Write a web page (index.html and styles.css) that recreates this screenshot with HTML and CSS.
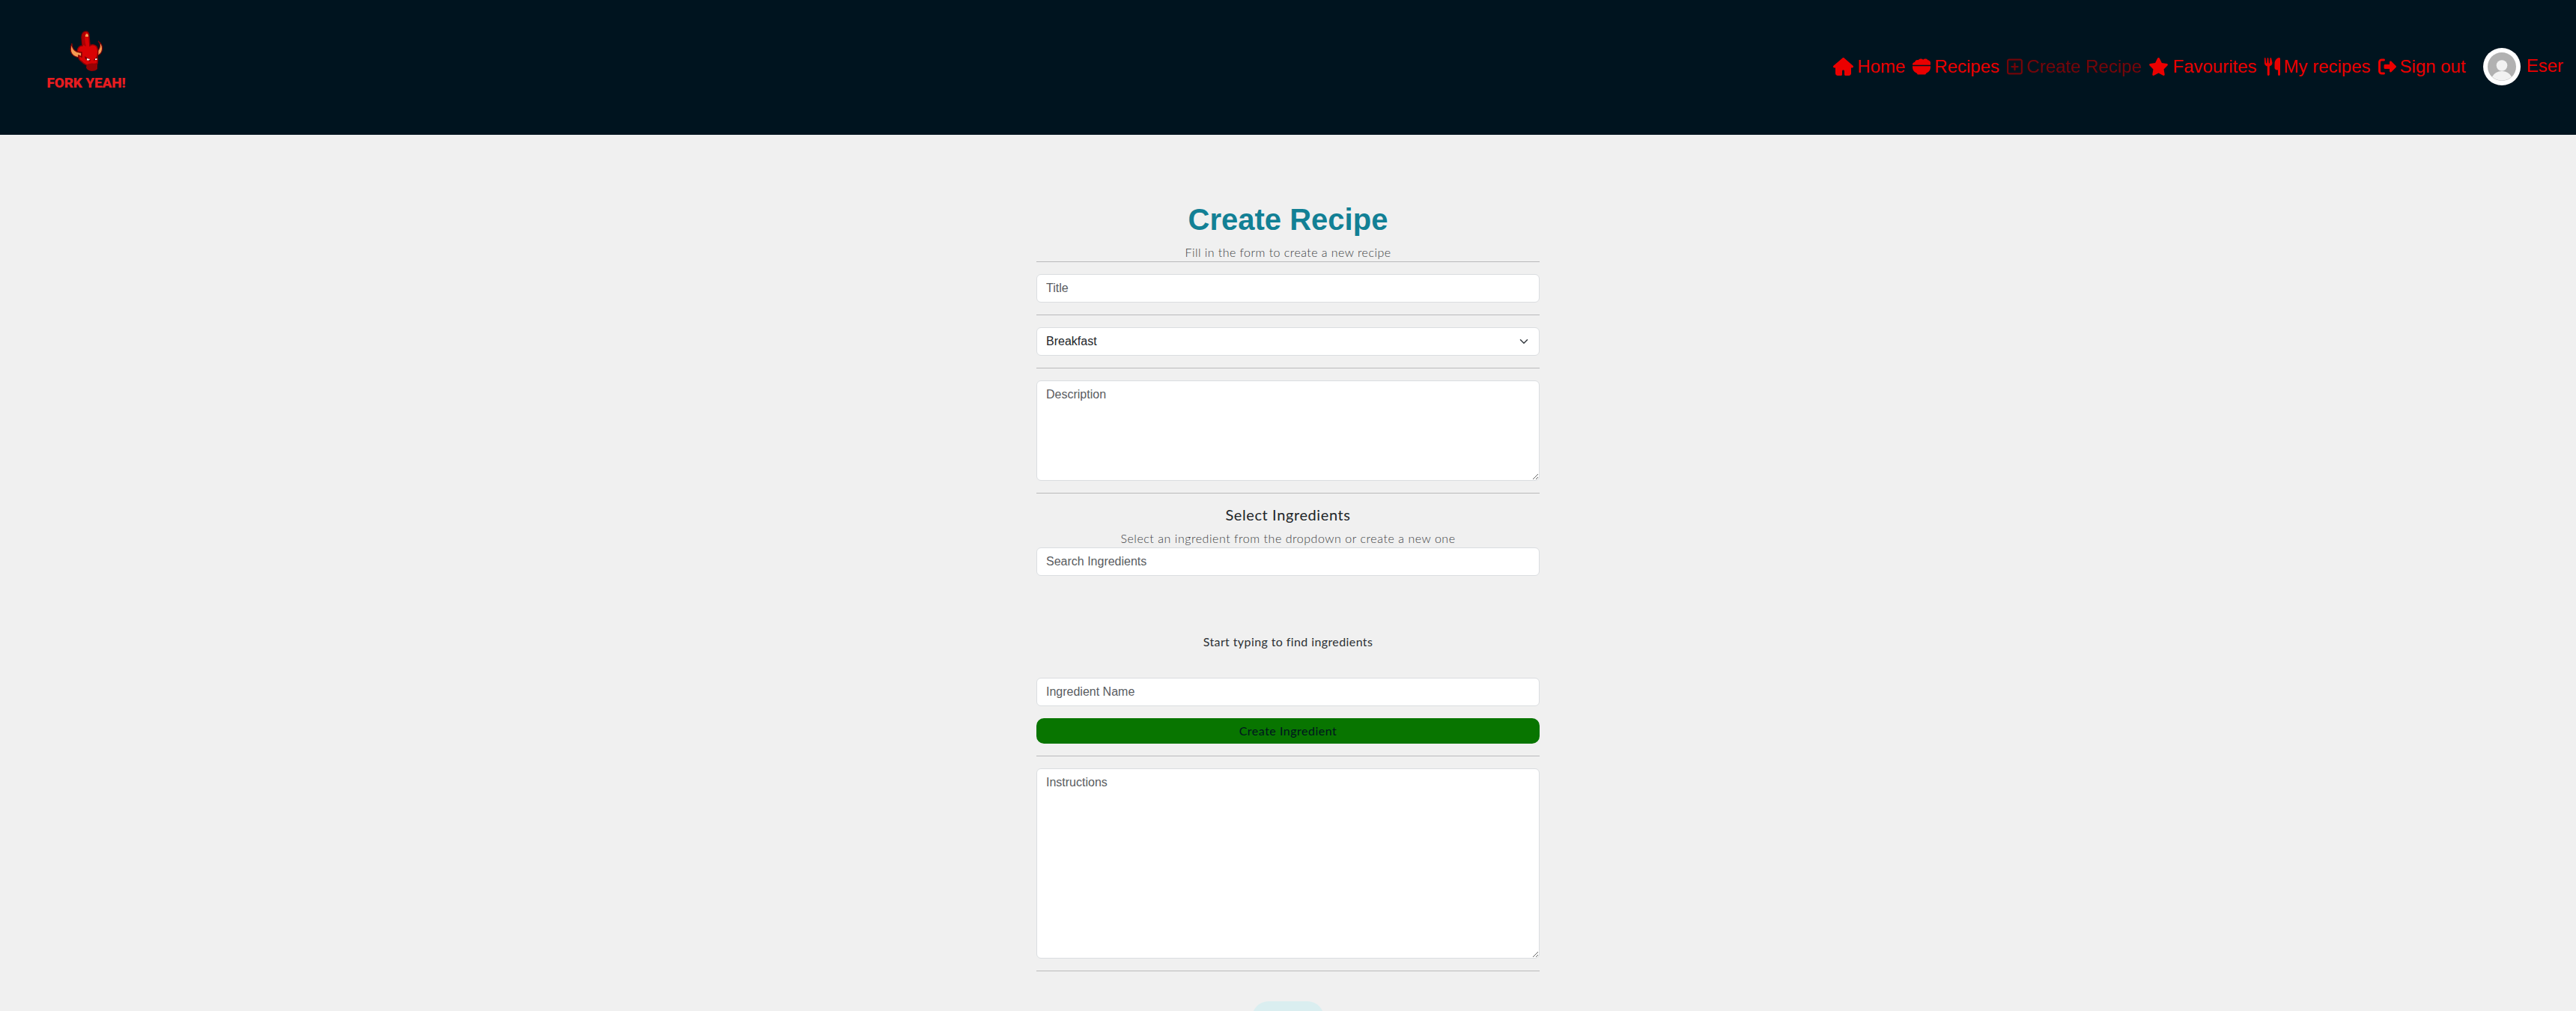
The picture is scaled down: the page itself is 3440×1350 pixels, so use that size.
FILE: index.html
```html
<!DOCTYPE html>
<html lang="en">
<head>
<meta charset="utf-8">
<title>Fork Yeah!</title>
<link rel="stylesheet" href="styles.css">
</head>
<body>
<header class="navbar">
  <a class="brand">
    <svg class="brand-mark" viewBox="0 0 46 55" width="46" height="55">
      <path d="M4 17C-1 29 5 36 17 36V29C9 29 4 25 4 17Z" fill="#f59b52" stroke="#7c0507" stroke-width="1.2"/>
      <path d="M39 14C43 17 42 25 37 28L38 33C45 31 48 20 39 14Z" fill="#f59b52" stroke="#7c0507" stroke-width="1.2"/>
      <path d="M18 20L17 9C17 3 20 1 23 1S27 4 27 8L28 20Q33 17 37 21Q40 27 38 34Q39 39 38 44L24 46Q19 44 17 41Q12 38 13 33L17 35V29L11 28Q12 20 18 20Z" fill="#d90204" stroke="#870204" stroke-width="1.6"/>
      <path d="M19 19L18 9Q18 3 22 2Q20 10 23 21Z" fill="#a90204"/>
      <path d="M22 6Q24 2 26 6V8H22Z" fill="#f59b52"/>
      <path d="M24 45Q31 42 38 45V51Q36 54 30 54Q24 53 23 49Z" fill="#970204"/>
      <path d="M21 34L29 39L28 41L22 38ZM38 34L33 39V40L38 38Z" fill="#7a0204"/>
      <path d="M24 37L28 38L27 39.500H24ZM35 37.500L37.500 37V39H35Z" fill="#fff"/>
    </svg>
    <span class="brand-name">FORK YEAH!</span>
  </a>
  <nav class="nav-links">
    <a class="link link-home"><svg viewBox="0 0 576 512" width="27" height="24"><path d="M575.800 255.500c0 18-15 32.100-32 32.100h-32l.7 160.200c0 35-28 64.200-64 64.200H352c-18 0-32-14-32-32v-96c0-18-14-32-32-32s-32 14-32 32v96c0 18-14 32-32 32h-96c-35 0-64-29-64-64V287.600H32c-18 0-32-14-32-32 0-9 3-17 10-24L266.400 8c7-7 15-8 22-8s15 2 21 7l255.400 224.500c8 7 12 15 11 24z"/></svg><span>Home</span></a>
    <a class="link link-recipes"><svg viewBox="0 0 512 512" width="24" height="24"><path d="M0 192c0-35 29-64 64-64h.5c7-36 40-64 78-64 8 0 16 1 23 3 15-22 41-35 70-35 27 0 51 11 66 29 15-18 39-29 66-29 29 0 55 13 70 35 36 5 65 30 74 61h.5c20 0 0 64 0 64v16H0zM0 240h512v32c0 82-51 144-128 175v1c0 18-14 32-32 32H160c-18 0-32-14-32-32v-1C51 416 0 354 0 272z"/></svg><span>Recipes</span></a>
    <a class="link link-create"><svg viewBox="0 0 448 512" width="21" height="24"><path d="M64 80c-9 0-16 7-16 16v320c0 9 7 16 16 16h320c9 0 16-7 16-16V96c0-9-7-16-16-16H64zM0 96c0-35 29-64 64-64h320c35 0 64 29 64 64v320c0 35-29 64-64 64H64c-35 0-64-29-64-64V96zm200 248v-64h-64c-13 0-24-11-24-24s11-24 24-24h64v-64c0-13 11-24 24-24s24 11 24 24v64h64c13 0 24 11 24 24s-11 24-24 24h-64v64c0 13-11 24-24 24s-24-11-24-24z" fill-rule="evenodd"/></svg><span>Create Recipe</span></a>
    <a class="link link-favs"><svg viewBox="0 0 576 512" width="27" height="24"><path d="M316.900 18C311.600 7 300.400 0 288.100 0s-23.400 7-28.800 18L195 150.300 51.400 171.500c-12 1.800-22 10.200-25.700 21.700s-.7 24.200 7.900 32.700L137.800 329 113.200 474.700c-2 12 3 24.200 12.900 31.300s23 8 33.800 2.300l128.300-68.500 128.300 68.500c10.800 5.700 23.900 4.900 33.800-2.300s14.900-19.300 12.900-31.300L438.500 329l104.200-103.100c8.600-8.500 11.700-21.200 7.900-32.700s-13.700-19.900-25.700-21.700L381.200 150.300 316.900 18z"/></svg><span>Favourites</span></a>
    <a class="link link-mine"><svg viewBox="0 0 448 512" width="21" height="24"><path d="M16 0c8 0 15 6 16 14l12 134c0 7 5 12 11 12 7 0 12-5 12-11L80 15c1-9 8-15 16-15s15 6 16 15l13 134c0 6 5 11 12 11 6 0 11-5 11-12L160 14c1-8 8-14 16-14 9 0 16 6 18 15l30 135c0 43-27 82-80 95v235c0 18-14 32-32 32s-32-14-32-32V245C27 232-4 193 0 150L0 15C1 6 8 0 16 0zM448 32v448c0 18-14 32-32 32s-32-14-32-32V352h-32c-35 0-64-29-64-64V176C288 80 352 0 416 0c18 0 32 14 32 32z"/></svg><span>My recipes</span></a>
    <a class="link link-out"><svg viewBox="0 0 512 512" width="24" height="24"><path d="M502.600 278.600c12.500-12.500 12.500-32.800 0-45.300l-128-128c-9.200-9.200-22.900-11.900-34.900-6.900S320 115.100 320 128v64H192c-17.700 0-32 14.300-32 32v64c0 17.700 14.300 32 32 32h128v64c0 12.900 7.800 24.600 19.800 29.600s25.700 2.200 34.900-6.900l128-128zM160 96c17.700 0 32-14.300 32-32s-14.300-32-32-32H96C43 32 0 75 0 128v256c0 53 43 96 96 96h64c17.700 0 32-14.300 32-32s-14.300-32-32-32H96c-17.700 0-32-14.300-32-32V128c0-17.700 14.300-32 32-32h64z"/></svg><span>Sign out</span></a>
    <a class="link link-user"><svg viewBox="0 0 50 50" width="50" height="50"><circle cx="25" cy="25" r="25" fill="#fff"/><circle cx="25" cy="25" r="19" fill="#b1b1b1"/><circle cx="25" cy="23.500" r="7.300" fill="#f2f2f2"/><path d="M12 38.500Q16 31 25 31T38 38.500A19 19 0 0 1 12 38.500Z" fill="#f2f2f2"/></svg><span>Eser</span></a>
  </nav>
</header>
<main class="page">
  <h1 class="title">Create Recipe</h1>
  <p class="hint hint-form">Fill in the form to create a new recipe</p>
  <hr class="rule">
  <input class="field" placeholder="Title">
  <hr class="rule">
  <div class="field select"><span>Breakfast</span><svg viewBox="0 0 16 16" width="16" height="12"><path d="m2 5 6 6 6-6" fill="none" stroke="#343a40" stroke-width="2" stroke-linecap="round" stroke-linejoin="round"/></svg></div>
  <hr class="rule">
  <textarea class="field description" placeholder="Description"></textarea>
  <hr class="rule">
  <h2 class="subtitle">Select Ingredients</h2>
  <p class="hint hint-select">Select an ingredient from the dropdown or create a new one</p>
  <input class="field" placeholder="Search Ingredients">
  <p class="empty">Start typing to find ingredients</p>
  <input class="field" placeholder="Ingredient Name">
  <button class="create">Create Ingredient</button>
  <hr class="rule">
  <textarea class="field instructions" placeholder="Instructions"></textarea>
  <hr class="rule">
  <button class="submit" aria-label="Submit"></button>
</main>
</body>
</html>
```
FILE: styles.css
```css
* { box-sizing: border-box; }
body {
  margin: 0;
  height: 1350px;
  overflow: hidden;
  background: #f0f0f0;
  color: #212529;
  font: 16px/24px "Liberation Sans", Arial, sans-serif;
}
.navbar {
  display: flex;
  justify-content: space-between;
  height: 180px;
  padding-right: 17px;
  background: #00141f;
}
.brand {
  display: flex;
  flex-direction: column;
  align-items: center;
  width: 230px;
  padding-top: 41px;
}
.brand-mark { display: block; }
.brand-name {
  margin-top: 4px;
  color: #e81c1f;
  font: 900 19px/22px Roboto, sans-serif;
  letter-spacing: -.2px;
  white-space: nowrap;
}
.nav-links { display: flex; align-items: center; margin-top: -2px; }
.link {
  display: flex;
  align-items: center;
  gap: 5px;
  margin-right: 10px;
  color: #eb0000;
  font-size: 24px;
  line-height: 36px;
  white-space: nowrap;
}
.link svg { display: block; fill: currentColor; }
.link-create { color: #730509; }
.link-out { margin-right: 23px; }
.link-user { margin-right: 0; gap: 8px; }
.link-user span { margin-top: -3px; }
.page {
  display: flex;
  flex-direction: column;
  width: 672px;
  margin: 0 auto;
  padding-top: 89px;
}
.title {
  margin: 0;
  color: #128095;
  font-size: 40px;
  line-height: 48px;
  text-align: center;
}
.hint, .empty, .subtitle, .create {
  font-family: Lato, sans-serif;
  text-align: center;
}
.hint { margin: 0; color: #3c4043; font-weight: 300; white-space: nowrap; }
.hint-form { margin-top: 8px; letter-spacing: .45px; }
.rule {
  width: 100%;
  height: 1px;
  margin: 16px 0;
  border: 0;
  background: #bababb;
}
.hint-form + .rule { margin-top: 0; }
.field {
  display: block;
  width: 100%;
  height: 38px;
  margin: 0;
  padding: 6px 12px;
  border: 1px solid #dadde0;
  border-radius: 6px;
  background: #fff;
  color: #212529;
  font: 16px/24px "Liberation Sans", Arial, sans-serif;
}
.field::placeholder { color: #595c5f; opacity: 1; }
.select { display: flex; align-items: center; justify-content: space-between; }
.description { height: 134px; }
.instructions { height: 254px; }
.subtitle {
  margin: 0 0 8px;
  font-size: 20px;
  line-height: 24px;
  font-weight: 400;
  letter-spacing: .6px;
}
.hint-select { letter-spacing: .54px; }
.empty { margin: 76px 0 36px; color: #2c3034; letter-spacing: .4px; }
.create {
  height: 34px;
  margin-top: 16px;
  padding: 0 6px 2px;
  border: 0;
  border-radius: 10px;
  background: #087500;
  color: #00141f;
  font-size: 16px;
  letter-spacing: .5px;
}
.submit {
  align-self: center;
  width: 96px;
  height: 50px;
  margin-top: 24px;
  border: 0;
  border-radius: 22px;
  background: #daeef0;
}
```
